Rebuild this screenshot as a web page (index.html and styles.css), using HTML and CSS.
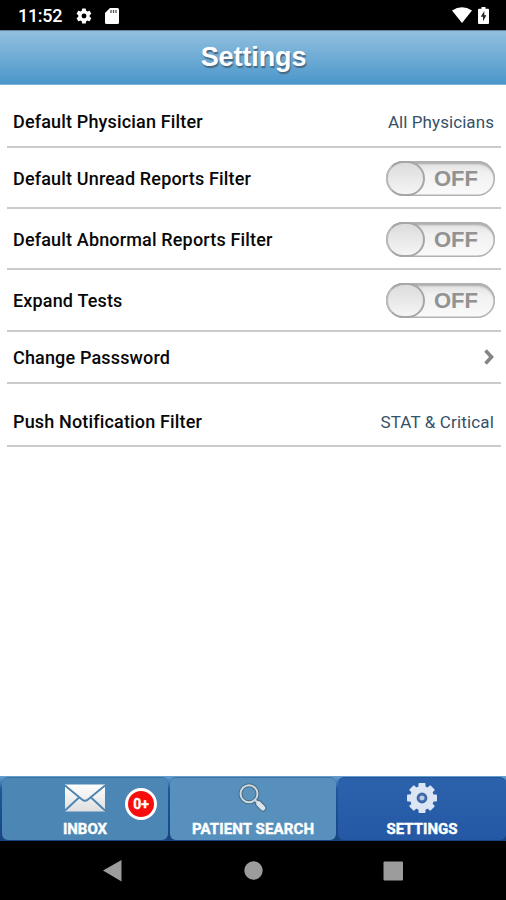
FILE: index.html
```html
<!DOCTYPE html>
<html lang="en">
<head>
<meta charset="utf-8">
<title>Settings</title>
<link rel="stylesheet" href="styles.css">
</head>
<body>
<div class="screen">
  <div class="status">
    <span class="clock">11:52</span>
    <svg class="status-gear" width="18" height="18" viewBox="0 0 24 24"><path fill="#fff" fill-rule="evenodd" d="M19.4 13c.1-.3.1-.6.1-1s0-.7-.1-1l2.100-1.600c.2-.2.3-.5.1-.7l-2-3.400c-.1-.2-.4-.3-.6-.2l-2.500 1a7 7 0 0 0-1.700-1l-.4-2.600a.5.5 0 0 0-.5-.5h-4a.5.5 0 0 0-.5.5L9 5.100a7 7 0 0 0-1.700 1l-2.500-1c-.2-.1-.5 0-.6.2l-2 3.400c-.1.2-.1.5.1.7L4.500 11a7 7 0 0 0 0 2l-2.200 1.600c-.2.2-.2.4-.1.700l2 3.400c.1.2.4.3.6.2l2.500-1a7 7 0 0 0 1.700 1l.4 2.600c0 .3.3.5.5.5h4c.3 0 .5-.2.5-.5l.4-2.600a7 7 0 0 0 1.700-1l2.500 1c.2.1.5 0 .6-.2l2-3.400c.1-.2.1-.5-.1-.7zM12 15.300a3.300 3.300 0 1 1 0-6.600 3.300 3.300 0 0 1 0 6.600z"/></svg>
    <svg class="status-card" width="14" height="16" viewBox="0 0 14 16"><path fill="#fff" d="M5 0h7.500Q14 0 14 1.500v13Q14 16 12.500 16h-11Q0 16 0 14.500V5z"/><path stroke="#555" stroke-width="1.300" d="M6 2v3M8.500 2v3M11 2v3"/></svg>
    <svg class="status-wifi" width="20" height="16" viewBox="0 0 20 16"><path fill="#fff" d="M0 3.600Q10-3.200 20 3.600L10 16z"/></svg>
    <svg class="status-battery" width="11" height="17" viewBox="0 0 11 17"><path fill="#fff" d="M3.500 0h4v1.700H10q1 0 1 1V16q0 1-1 1H1q-1 0-1-1V2.700q0-1 1-1h2.500z"/><path fill="#222" d="M6.300 4L2.800 9.800H5v4.500l3.400-6H6.300z"/></svg>
  </div>
  <header class="header"><h1>Settings</h1></header>
  <main class="list">
    <div class="row row-first"><span class="label">Default Physician Filter</span><span class="value">All Physicians</span></div>
    <div class="row row-toggle"><span class="label">Default Unread Reports Filter</span><span class="toggle"><i class="knob"></i><b>OFF</b></span></div>
    <div class="row row-toggle"><span class="label">Default Abnormal Reports Filter</span><span class="toggle"><i class="knob"></i><b>OFF</b></span></div>
    <div class="row row-toggle row-expand"><span class="label">Expand Tests</span><span class="toggle"><i class="knob"></i><b>OFF</b></span></div>
    <div class="row row-link"><span class="label">Change Passsword</span><svg class="chevron" width="10" height="16" viewBox="0 0 10 16"><path fill="none" stroke="#858585" stroke-width="3.600" d="M1.500 1.500L7.500 8l-6 6.500"/></svg></div>
    <div class="row row-push"><span class="label">Push Notification Filter</span><span class="value value-wide">STAT &amp; Critical</span></div>
  </main>
  <nav class="tabs">
    <div class="tab tab-inbox">
      <svg class="icon" width="42" height="32" viewBox="0 0 42 32">
        <defs><linearGradient id="paper" x1="0" y1="0" x2="0" y2="1"><stop offset="0" stop-color="#fff"/><stop offset="1" stop-color="#dedede"/></linearGradient></defs>
        <rect x="1" y="1.500" width="40" height="27" fill="url(#paper)"/>
        <path fill="none" stroke="#4d84b2" stroke-width="1.900" d="M1 2.500l17 14q3 2.500 6 0l17-14M1 27.500l14-13M41 27.500l-14-13"/>
      </svg>
      <span class="tab-label">INBOX</span>
      <span class="badge">0+</span>
    </div>
    <div class="tab tab-search">
      <svg class="icon" width="42" height="32" viewBox="0 0 42 32">
        <path stroke="#476c86" stroke-width="7" stroke-linecap="round" d="M26.500 20.500l4.500 4.500"/>
        <path stroke="#476c86" stroke-width="4" d="M22 16l5 5"/>
        <circle cx="17" cy="10.800" r="8.500" fill="#5c93bc" stroke="#476c86" stroke-width="4"/>
        <circle cx="17" cy="10.800" r="8.500" fill="none" stroke="#cbd8e1" stroke-width="2"/>
        <path stroke="#cbd8e1" stroke-width="2" d="M22.500 16.500l4 4"/>
        <path stroke="#d9e3ea" stroke-width="5" stroke-linecap="round" d="M26.700 20.700l4.200 4.200"/>
      </svg>
      <span class="tab-label label-search">PATIENT SEARCH</span>
    </div>
    <div class="tab tab-settings">
      <svg class="icon" width="42" height="32" viewBox="0 0 42 32">
        <g transform="translate(21 15)" fill="#dce5f4">
          <g><rect x="-3.500" y="-15" width="7" height="30" rx="1"/><rect x="-15" y="-3.500" width="30" height="7" rx="1"/></g>
          <g transform="rotate(45)"><rect x="-3.500" y="-15" width="7" height="30" rx="1"/><rect x="-15" y="-3.500" width="30" height="7" rx="1"/></g>
          <circle r="12"/>
          <circle r="4" fill="#b9cbe5" stroke="#3f68a6" stroke-width="2.800"/>
        </g>
      </svg>
      <span class="tab-label">SETTINGS</span>
    </div>
  </nav>
  <div class="system">
    <svg width="506" height="59" viewBox="0 0 506 59" fill="#9c9c9c"><path d="M103 29.500L121.500 19v21.500z"/><circle cx="253.500" cy="29.500" r="9.200"/><rect x="383.500" y="20.500" width="19.500" height="19" rx="1"/></svg>
  </div>
</div>
</body>
</html>
```
FILE: styles.css
```css
* { box-sizing: border-box; }
body { margin: 0; background: #fff; font-family: Roboto, "Liberation Sans", sans-serif; }
.screen { width: 506px; height: 900px; display: flex; flex-direction: column; overflow: hidden; }

.status { height: 30px; background: #000; display: flex; align-items: center; padding: 2px 17px 0 18px; flex: none; }
.clock { color: #fff; font-size: 18px; font-weight: 500; line-height: 28px; width: 57px; letter-spacing: -0.3px; white-space: nowrap; }
.status-card { margin-left: 12px; }
.status-wifi { margin-left: auto; margin-right: 6px; margin-bottom: 2px; }
.status-battery { margin-bottom: 2px; }

.header { height: 55px; flex: none; background: linear-gradient(#92bfdf, #4b97cb); border-top: 1px solid #62839a; border-bottom: 1px solid #7fb0d2; display: flex; justify-content: center; }
.header h1 { margin: 0 0 0 1px; font: bold 27px/52px "Liberation Sans", sans-serif; letter-spacing: -0.1px; color: #fff; text-shadow: 1px 2px 1px #47687f; }

.list { flex: 1; padding: 0 5px 0 7px; }
.row { display: flex; justify-content: space-between; align-items: center; padding: 0 7px 0 6px; border-bottom: 2px solid #cbcbcb; }
.row-first { height: 63px; padding-top: 13px; }
.row-toggle { height: 61px; padding-top: 1px; padding-right: 6px; }
.row-expand { height: 62px; }
.row-link { height: 52px; }
.row-link .label { padding-top: 2px; }
.row-push { height: 63px; padding-top: 14px; }
.label { font-size: 18px; font-weight: 500; line-height: 22px; letter-spacing: 0.16px; color: #080808; white-space: nowrap; }
.row-toggle .label { padding-top: 1px; }
.value { font-size: 17px; line-height: 22px; letter-spacing: 0.07px; color: #35516a; white-space: nowrap; }
.value-wide { letter-spacing: 0.15px; }

.toggle { width: 109px; height: 35px; border-radius: 18px; box-shadow: inset 0 0 0 1.5px #b2b2b2, inset 0 3px 2px #aaa; background: linear-gradient(#dedede, #f1f1f1 35%, #fafafa); display: flex; align-items: center; justify-content: space-between; padding-right: 17px; }
.knob { width: 39px; height: 35px; flex: none; border-radius: 18px; border: 2px solid #a6a6a6; border-left-color: #bababa; background: linear-gradient(#dcdcdc, #f5f5f5); }
.toggle b { font: bold 22px/30px "Liberation Sans", sans-serif; padding-top: 1px; color: #929292; }

.tabs { height: 65px; flex: none; display: grid; grid-template-columns: 166px 166px 168px; column-gap: 2px; padding: 1px 0 1px 2px; background: linear-gradient(#68a1d0, #20569a 20%, #174580); }
.tab { position: relative; border-radius: 6px; display: flex; flex-direction: column; align-items: center; padding-top: 5px; background: #508bb9; border-top: 1px solid #3c74a2; }
.tab-inbox { background: #4b86b5; }
.tab-search { background: #5790bd; }
.tab-settings { background: linear-gradient(#2c62ac, #2458a5); border-top-color: #245398; }
.icon { display: block; flex: none; }
.tab-label { color: #fff; font-size: 15px; font-weight: 700; line-height: 18px; margin-top: 5px; white-space: nowrap; -webkit-text-stroke: 0.4px #fff; }
.label-search { letter-spacing: 0.12px; }
.badge { position: absolute; left: 123px; top: 10px; width: 32px; height: 32px; border: 3px solid #fff; border-radius: 50%; background: #f80d0d; color: #fff; font-size: 14px; font-weight: 700; line-height: 26px; text-align: center; -webkit-text-stroke: 0.4px #fff; }

.system { height: 59px; flex: none; background: #000; }
.system svg { display: block; }
```
